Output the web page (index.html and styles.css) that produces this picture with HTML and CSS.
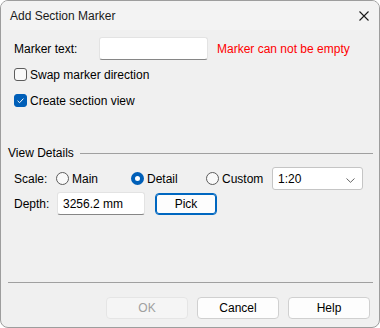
FILE: index.html
```html
<!DOCTYPE html>
<html lang="en">
<head>
	<meta charset="UTF-8">
	<title>Add Section Marker</title>
	<link rel="stylesheet" href="styles.css">
</head>
<body>
	<div class="window">
		<div class="titlebar">
			<span class="title">Add Section Marker</span>
			<svg class="close" width="10" height="10" viewBox="0 0 10 10"><path d="M0.5 0.5L9.5 9.5M9.5 0.5L0.5 9.5" stroke="#1a1a1a" stroke-width="1.1" fill="none"/></svg>
		</div>
		<div class="content">
			<div class="row row-marker">
				<span class="lbl lbl-marker">Marker text:</span>
				<span class="textbox tb-marker"></span>
				<span class="error">Marker can not be empty</span>
			</div>
			<div class="check-row first">
				<span class="check"></span>
				<span>Swap marker direction</span>
			</div>
			<div class="check-row second">
				<span class="check on"><svg width="13" height="13" viewBox="0 0 13 13"><path d="M3.6 6.8L5.6 8.7L9.4 4.6" stroke="#fff" stroke-width="1" fill="none"/></svg></span>
				<span>Create section view</span>
			</div>

			<div class="group-head">
				<span>View Details</span>
				<span class="group-line"></span>
			</div>
			<div class="group">
				<div class="row row-scale">
					<span class="lbl lbl-scale">Scale:</span>
					<span class="radio-item"><span class="radio"></span>Main</span>
					<span class="radio-item"><span class="radio on"></span>Detail</span>
					<span class="radio-item custom"><span class="radio"></span>Custom</span>
					<span class="combo">1:20
						<svg class="chev" width="9" height="5" viewBox="0 0 9 5"><path d="M0.5 0.5L4.5 4.3L8.5 0.5" stroke="#555" stroke-width="0.9" fill="none"/></svg>
					</span>
				</div>
				<div class="row row-depth">
					<span class="lbl lbl-depth">Depth:</span>
					<span class="textbox tb-depth">3256.2 mm</span>
					<span class="btn btn-pick">Pick</span>
				</div>
			</div>

			<div class="sep"></div>
			<div class="buttons">
				<span class="btn btn-dlg disabled">OK</span>
				<span class="btn btn-dlg">Cancel</span>
				<span class="btn btn-dlg">Help</span>
			</div>
		</div>
	</div>
</body>
</html>
```

FILE: styles.css
```css
*{
	margin:0;
	padding:0;
	box-sizing:border-box;
}
body{
	background:#ffffff;
	font-family:"Liberation Sans", Arial, sans-serif;
	font-size:12px;
	color:#000;
}
.window{
	width:380px;
	height:328px;
	border:1px solid #9d9d9d;
	border-radius:8px;
	background:#f0f0f0;
	overflow:hidden;
}
.titlebar{
	height:29px;
	background:#f3f3f3;
	display:flex;
	align-items:center;
	padding-left:9px;
	padding-right:10px;
}
.title{
	flex:1;
	color:#1a1a1a;
	padding-top:1px;
}
.close{
	display:block;
	margin-top:1px;
}
.content{
	padding:7px 6px 0 13px;
}
.row{
	display:flex;
	align-items:center;
	height:23px;
}
.lbl-marker{
	width:85px;
}
.textbox{
	display:flex;
	align-items:center;
	height:23px;
	background:#fff;
	border:1px solid #e3e3e3;
	border-bottom:1px solid #868686;
	border-radius:3px;
	padding-left:5px;
}
.tb-marker{
	width:109px;
}
.error{
	color:#ff0000;
	margin-left:9px;
}
.check-row{
	display:flex;
	align-items:center;
	height:15px;
}
.check-row.first{
	margin-top:7px;
}
.check-row.second{
	margin-top:11px;
}
.check{
	width:13px;
	height:13px;
	border:1px solid #5c5c5c;
	border-radius:3px;
	background:#f9f9f9;
	margin-right:3px;
}
.check.on{
	background:#005fb8;
	border-color:#005fb8;
}
.check svg{
	display:block;
	margin:-1px;
}
.group-head{
	display:flex;
	align-items:center;
	height:14px;
	margin-top:38px;
	margin-left:-6px;
}
.group-line{
	flex:1;
	height:1px;
	background:#a0a0a0;
	margin-left:6px;
	margin-top:1px;
}
.row-scale{
	margin-top:7px;
}
.lbl-scale{
	width:42px;
}
.radio-item{
	display:flex;
	align-items:center;
	width:75px;
}
.radio-item.custom{
	width:66px;
}
.radio{
	width:13px;
	height:13px;
	border:1px solid #5c5c5c;
	border-radius:50%;
	background:#f9f9f9;
	margin-right:3px;
}
.radio.on{
	background:#fff;
	border:4px solid #005fb8;
}
.combo{
	position:relative;
	display:flex;
	align-items:center;
	width:91px;
	height:23px;
	background:#fff;
	border:1px solid #c5c5c5;
	border-radius:3px;
	padding-left:5px;
}
.chev{
	position:absolute;
	right:7px;
	top:10px;
}
.row-depth{
	margin-top:2px;
}
.lbl-depth{
	width:43px;
}
.tb-depth{
	width:88px;
}
.btn{
	display:flex;
	align-items:center;
	justify-content:center;
	height:22px;
	background:#fdfdfd;
	border:1px solid #d0d0d0;
	border-radius:4px;
}
.btn-pick{
	width:62px;
	margin-left:10px;
	margin-top:1px;
	border:1px solid #0067c0;
	box-shadow:inset 0 0 0 1px #0067c0;
}
.sep{
	height:1px;
	background:#a0a0a0;
	margin-top:67px;
	margin-left:-6px;
}
.buttons{
	display:flex;
	justify-content:flex-end;
	gap:9px;
	margin-top:14px;
	padding-right:3px;
}
.btn-dlg{
	width:82px;
}
.btn.disabled{
	color:#a0a0a0;
	background:#f5f5f5;
	border-color:#e5e5e5;
}
```
